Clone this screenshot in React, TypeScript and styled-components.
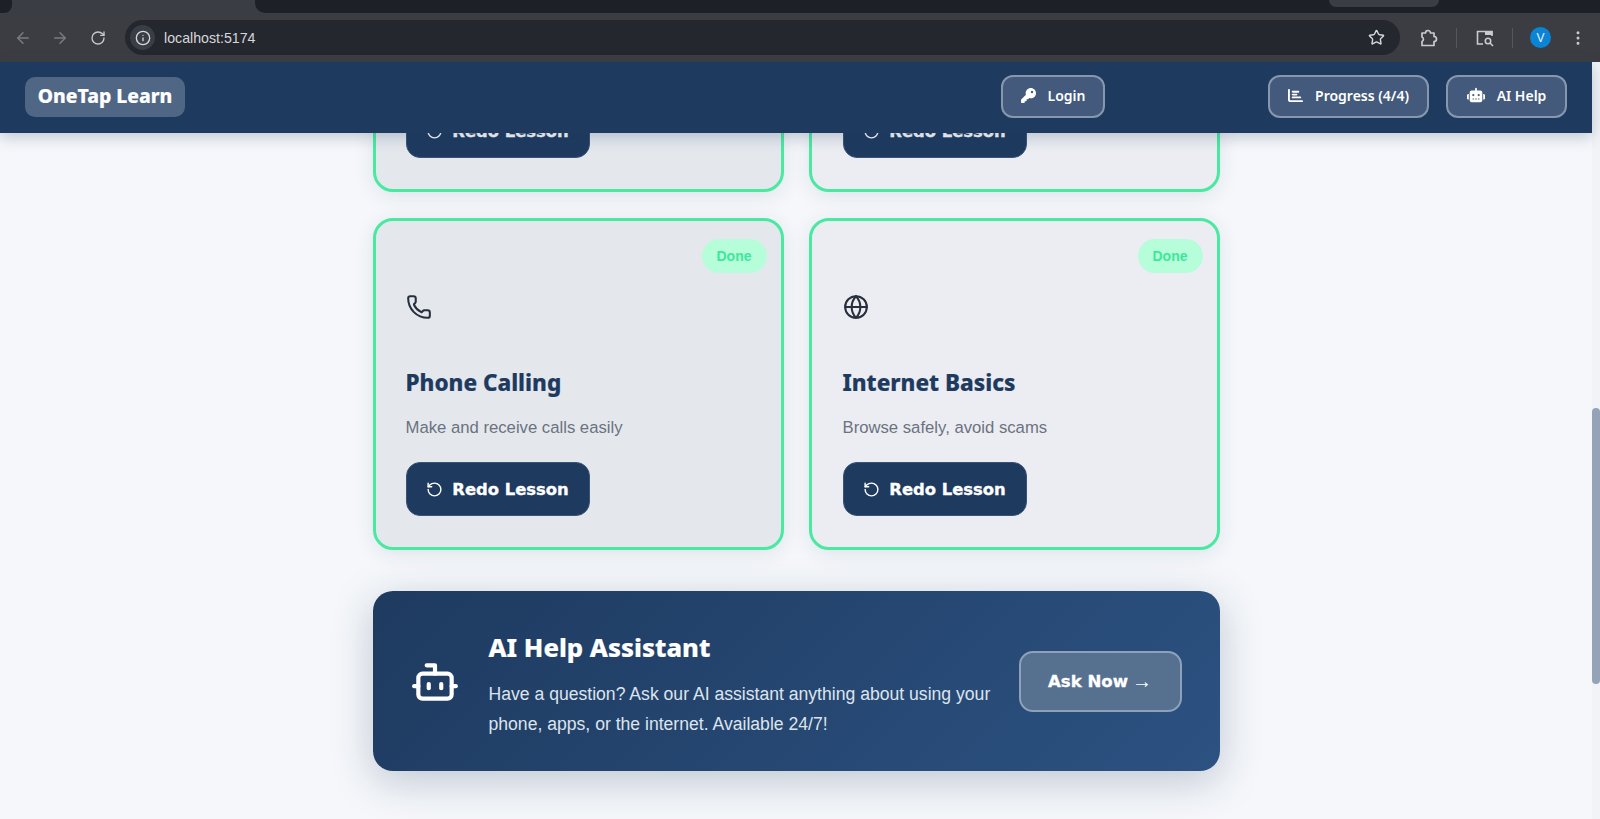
import React from "react";
import styled, {createGlobalStyle} from "styled-components";
import {ArrowLeft, ArrowRight, RotateCw, Info, Star, EllipsisVertical, Phone, Globe, RotateCcw, Bot} from "lucide-react";
import {FaKey, FaChartBar, FaRobot} from "react-icons/fa6";

const GlobalStyle = createGlobalStyle`
  html, body {
    margin: 0;
    padding: 0;
    height: 100%;
    overflow: hidden;
    background: #f5f7fa;
    font-family: "Liberation Sans", Arial, sans-serif;
  }
  * { box-sizing: border-box; }
`;

const Page = styled.div`
  width: 1600px;
  height: 819px;
  display: flex;
  flex-direction: column;
  overflow: hidden;
`;

// browser chrome
const TabStrip = styled.div`
  height: 13px;
  background: #3b3d44;
  display: flex;
  justify-content: space-between;
`;

const StripEnd = styled.div`
  width: 12px;
  background: #1e2028;
  border-bottom-right-radius: 8px;
`;

const StripRest = styled.div`
  width: 1345px;
  background: #1e2028;
  border-bottom-left-radius: 10px;
  padding-left: 1074px;
`;

const StripTab = styled.div`
  width: 110px;
  height: 7px;
  background: #3b3d44;
  border-radius: 0 0 8px 8px;
`;

const Toolbar = styled.div`
  height: 49px;
  background: #3b3d42;
  display: flex;
  align-items: center;
  padding-left: 14px;
  color: #c4c7cc;
`;

const NavIcon = styled.span<{$dim?: boolean}>`
  width: 37px;
  display: flex;
  color: ${(p) => (p.$dim ? "#797b80" : "#c6c8cc")};
`;

const ReloadIcon = styled(NavIcon)`
  padding-left: 2px;
`;

const Omnibox = styled.div`
  width: 1275px;
  height: 35px;
  border-radius: 18px;
  background: #24272e;
  display: flex;
  align-items: center;
  padding: 0 15px 0 5px;
  font-size: 14.2px;
  color: #d5d7da;
`;

const InfoDot = styled.span`
  width: 25px;
  height: 25px;
  border-radius: 50%;
  background: #3b3d44;
  display: flex;
  align-items: center;
  justify-content: center;
  margin-right: 9px;
  color: #d5d7da;
`;

const Url = styled.span`
  flex: 1;
`;

const ToolIcons = styled.div`
  display: flex;
  align-items: center;
  margin-left: 20px;
  color: #c9cbcf;
`;

const Sep = styled.span`
  width: 1px;
  height: 20px;
  background: #55575c;
  margin: 0 19px 0 18px;
`;

const Avatar = styled.span`
  width: 21px;
  height: 21px;
  border-radius: 50%;
  background: #0b84d4;
  color: #e8f2fa;
  font-size: 12px;
  display: flex;
  align-items: center;
  justify-content: center;
  margin: 0 18px 0 -2px;
`;

const Shot = styled.div`
  flex: 1;
  min-height: 0;
  display: flex;
`;

const Column = styled.div`
  width: 1592px;
  display: flex;
  flex-direction: column;
  min-height: 0;
`;

const Header = styled.header`
  height: 71px;
  flex: none;
  background: #1e3a5f;
  box-shadow: 0 4px 14px rgba(30, 58, 95, 0.25);
  display: flex;
  align-items: center;
  padding: 0 25px 2px;
  position: relative;
  z-index: 2;
`;

const Logo = styled.div`
  width: 160px;
  height: 40px;
  border-radius: 10px;
  background: #4f6685;
  color: #fff;
  font-family: "Noto Sans", sans-serif;
  font-weight: 800;
  font-size: 19.3px;
  -webkit-text-stroke: 0.2px #fff;
  padding-bottom: 3px;
  display: flex;
  align-items: center;
  justify-content: center;
`;

const NavButton = styled.button<{$w: number; $ml: string}>`
  width: ${(p) => p.$w}px;
  height: 43px;
  margin-left: ${(p) => p.$ml};
  border: 2px solid #8797ad;
  border-radius: 12px;
  background: #435a7c;
  color: #fff;
  font-family: "Noto Sans", sans-serif;
  font-weight: 600;
  font-size: 14px;
  display: flex;
  align-items: center;
  justify-content: center;
  gap: 12px;
  padding: 0 0 3px;
`;

const Main = styled.main`
  flex: 1;
  min-height: 0;
  overflow: hidden;
  display: flex;
  flex-direction: column;
  justify-content: flex-end;
  align-items: center;
  padding-bottom: 48px;
`;

const Container = styled.div`
  width: 847px;
  flex: none;
  display: flex;
  flex-direction: column;
  gap: 41px;
`;

const Grid = styled.div`
  display: grid;
  grid-template-columns: 411px 411px;
  gap: 26px 25px;
`;

const Card = styled.article<{$bg: string; $inset: number}>`
  height: 332px;
  position: relative;
  border: 3px solid #4ae9a2;
  border-radius: 20px;
  background: ${(p) => p.$bg};
  box-shadow: 0 4px 20px rgba(30, 58, 95, 0.1);
  padding: 73px 30px 30px ${(p) => p.$inset}px;
  display: flex;
  flex-direction: column;
  align-items: flex-start;
`;

const DoneBadge = styled.span`
  position: absolute;
  top: 18px;
  right: 14px;
  width: 65px;
  height: 34px;
  border-radius: 17px;
  background: #b6fdd9;
  color: #3fe79c;
  font-weight: 700;
  font-size: 14px;
  display: flex;
  align-items: center;
  justify-content: center;
`;

const CardIcon = styled.div`
  height: 26px;
  color: #272f3c;
  display: flex;
`;

const CardTitle = styled.h3`
  margin: 47px 0 0;
  font-family: "Noto Sans", sans-serif;
  font-weight: 800;
  font-size: 22.5px;
  -webkit-text-stroke: 0.2px #1e3a5f;
  line-height: 32px;
  color: #1e3a5f;
`;

const CardText = styled.p`
  margin: 17px 0 0;
  font-size: 16.7px;
  line-height: 24px;
  color: #6b7280;
`;

const RedoButton = styled.button`
  margin-top: 22px;
  width: 184px;
  height: 54px;
  border: 1px solid #3a5477;
  border-radius: 14px;
  background: #1e3a5f;
  color: #fff;
  font-family: "DejaVu Sans", sans-serif;
  font-weight: 700;
  font-size: 16.4px;
  -webkit-text-stroke: 0.35px #fff;
  display: flex;
  align-items: center;
  justify-content: center;
  gap: 9px;
  padding: 0;
`;

const Banner = styled.section`
  height: 180px;
  border-radius: 20px;
  background: linear-gradient(135deg, #1e3a5f, #2c5282);
  box-shadow: 0 10px 40px rgba(30, 58, 95, 0.25);
  display: flex;
  align-items: center;
  padding: 0 38px;
  color: #fff;
`;

const BannerIcon = styled.div`
  width: 50px;
  margin: 2px 29px 0 -1px;
  display: flex;
`;

const BannerBody = styled.div`
  flex: 1;
  padding-top: 6px;
`;

const BannerTitle = styled.h2`
  margin: 0 0 12px;
  font-family: "Noto Sans", sans-serif;
  font-weight: 800;
  font-size: 25.6px;
  -webkit-text-stroke: 0.2px #fff;
  line-height: 38px;
`;

const BannerText = styled.p`
  margin: 0;
  width: 510px;
  font-size: 17.6px;
  line-height: 30px;
  color: #dde4ed;
`;

const AskButton = styled.button`
  width: 163px;
  height: 61px;
  flex: none;
  border: 2px solid #8da2ba;
  border-radius: 14px;
  background: #56708f;
  color: #fff;
  font-family: "DejaVu Sans", sans-serif;
  font-weight: 700;
  font-size: 16.6px;
  -webkit-text-stroke: 0.3px #fff;
  display: flex;
  align-items: center;
  justify-content: center;
  gap: 4px;
  padding: 0;
`;

const ArrowGlyph = styled.span`
  font-family: "Liberation Sans", sans-serif;
  font-weight: 400;
  font-size: 20px;
  -webkit-text-stroke: 0;
`;

const ScrollTrack = styled.div`
  width: 8px;
  background: #f1f3f6;
  padding-top: 346px;
`;

const ScrollThumb = styled.div`
  height: 276px;
  border-radius: 4px;
  background: #94a3b8;
`;

const lessons = [
    {title: "Mobile Basics", text: "Learn to use your phone", Icon: Phone, bg: "#e4e8ed", inset: 30},
    {title: "Using Apps", text: "Install and open apps", Icon: Globe, bg: "#ebedf2", inset: 31},
    {title: "Phone Calling", text: "Make and receive calls easily", Icon: Phone, bg: "#e4e8ed", inset: 30},
    {title: "Internet Basics", text: "Browse safely, avoid scams", Icon: Globe, bg: "#ebedf2", inset: 31},
];

const ExtensionIcon = () => (
    <svg width="18" height="18" viewBox="0 0 18 18" fill="none" stroke="currentColor" strokeWidth="1.7" strokeLinejoin="round">
        <path d="M2 4h3.5a2.5 2.5 0 0 1 5 0H14v3.5a2.5 2.5 0 0 1 0 5V16.5H2v-4a2.5 2.5 0 0 0 0-4.5z" />
    </svg>
);

const SidePanelIcon = () => (
    <svg width="18" height="18" viewBox="0 0 18 18" fill="none" stroke="currentColor" strokeWidth="1.6">
        <path d="M7 15H1.5V2.5H16V7" />
        <rect x="9" y="2" width="7.5" height="4" fill="currentColor" stroke="none" />
        <circle cx="12" cy="12" r="2.7" />
        <path d="M14 14l3 3" />
    </svg>
);

const App = () => {
    return (
        <Page>
            <GlobalStyle />
            <TabStrip>
                <StripEnd />
                <StripRest><StripTab /></StripRest>
            </TabStrip>
            <Toolbar>
                <NavIcon $dim><ArrowLeft size={18} /></NavIcon>
                <NavIcon $dim><ArrowRight size={18} /></NavIcon>
                <ReloadIcon><RotateCw size={16} /></ReloadIcon>
                <Omnibox>
                    <InfoDot><Info size={16} /></InfoDot>
                    <Url>localhost:5174</Url>
                    <Star size={17} />
                </Omnibox>
                <ToolIcons>
                    <ExtensionIcon />
                    <Sep />
                    <SidePanelIcon />
                    <Sep />
                    <Avatar>V</Avatar>
                    <EllipsisVertical size={18} />
                </ToolIcons>
            </Toolbar>
            <Shot>
                <Column>
                    <Header>
                        <Logo>OneTap Learn</Logo>
                        <NavButton $w={104} $ml="auto"><FaKey size={15} /> Login</NavButton>
                        <NavButton $w={161} $ml="163px"><FaChartBar size={15} /> Progress (4/4)</NavButton>
                        <NavButton $w={121} $ml="17px"><FaRobot size={18} /> AI Help</NavButton>
                    </Header>
                    <Main>
                        <Container>
                            <Grid>
                                {lessons.map((l) => (
                                    <Card key={l.title} $bg={l.bg} $inset={l.inset}>
                                        <DoneBadge>Done</DoneBadge>
                                        <CardIcon><l.Icon size={26} strokeWidth={1.9} /></CardIcon>
                                        <CardTitle>{l.title}</CardTitle>
                                        <CardText>{l.text}</CardText>
                                        <RedoButton><RotateCcw size={17} strokeWidth={2} /> Redo Lesson</RedoButton>
                                    </Card>
                                ))}
                            </Grid>
                            <Banner>
                                <BannerIcon><Bot size={50} strokeWidth={2} /></BannerIcon>
                                <BannerBody>
                                    <BannerTitle>AI Help Assistant</BannerTitle>
                                    <BannerText>Have a question? Ask our AI assistant anything about using your phone, apps, or the internet. Available 24/7!</BannerText>
                                </BannerBody>
                                <AskButton>Ask Now <ArrowGlyph>→</ArrowGlyph></AskButton>
                            </Banner>
                        </Container>
                    </Main>
                </Column>
                <ScrollTrack><ScrollThumb /></ScrollTrack>
            </Shot>
        </Page>
    );
};

export default App;
